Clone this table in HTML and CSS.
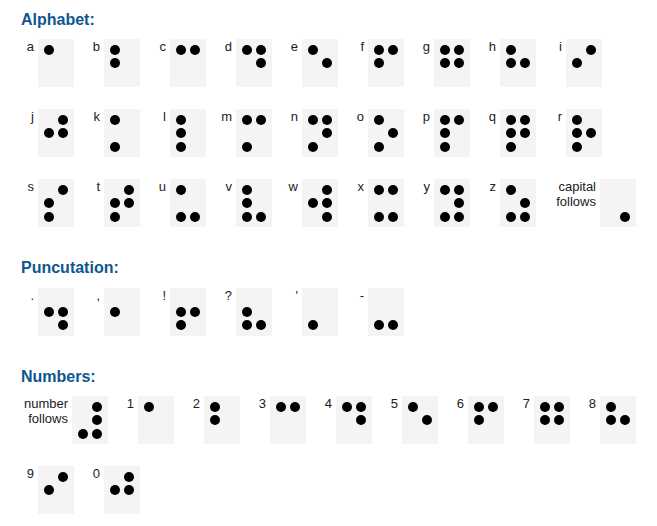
FILE: index.html
```html
<!DOCTYPE html>
<html lang="en">
<head>
<meta charset="utf-8">
<title>Braille</title>
<link rel="stylesheet" href="styles.css">
</head>
<body>
<div class="page">
  <section class="section">
    <h2 class="title">Alphabet:</h2>
    <div class="row">
      <div class="item"><span class="label">a</span><div class="cell"><i class="d"></i><i></i><i></i><i></i><i></i><i></i></div></div>
      <div class="item"><span class="label">b</span><div class="cell"><i class="d"></i><i></i><i class="d"></i><i></i><i></i><i></i></div></div>
      <div class="item"><span class="label">c</span><div class="cell"><i class="d"></i><i class="d"></i><i></i><i></i><i></i><i></i></div></div>
      <div class="item"><span class="label">d</span><div class="cell"><i class="d"></i><i class="d"></i><i></i><i class="d"></i><i></i><i></i></div></div>
      <div class="item"><span class="label">e</span><div class="cell"><i class="d"></i><i></i><i></i><i class="d"></i><i></i><i></i></div></div>
      <div class="item"><span class="label">f</span><div class="cell"><i class="d"></i><i class="d"></i><i class="d"></i><i></i><i></i><i></i></div></div>
      <div class="item"><span class="label">g</span><div class="cell"><i class="d"></i><i class="d"></i><i class="d"></i><i class="d"></i><i></i><i></i></div></div>
      <div class="item"><span class="label">h</span><div class="cell"><i class="d"></i><i></i><i class="d"></i><i class="d"></i><i></i><i></i></div></div>
      <div class="item"><span class="label">i</span><div class="cell"><i></i><i class="d"></i><i class="d"></i><i></i><i></i><i></i></div></div>
    </div>
    <div class="row">
      <div class="item"><span class="label">j</span><div class="cell"><i></i><i class="d"></i><i class="d"></i><i class="d"></i><i></i><i></i></div></div>
      <div class="item"><span class="label">k</span><div class="cell"><i class="d"></i><i></i><i></i><i></i><i class="d"></i><i></i></div></div>
      <div class="item"><span class="label">l</span><div class="cell"><i class="d"></i><i></i><i class="d"></i><i></i><i class="d"></i><i></i></div></div>
      <div class="item"><span class="label">m</span><div class="cell"><i class="d"></i><i class="d"></i><i></i><i></i><i class="d"></i><i></i></div></div>
      <div class="item"><span class="label">n</span><div class="cell"><i class="d"></i><i class="d"></i><i></i><i class="d"></i><i class="d"></i><i></i></div></div>
      <div class="item"><span class="label">o</span><div class="cell"><i class="d"></i><i></i><i></i><i class="d"></i><i class="d"></i><i></i></div></div>
      <div class="item"><span class="label">p</span><div class="cell"><i class="d"></i><i class="d"></i><i class="d"></i><i></i><i class="d"></i><i></i></div></div>
      <div class="item"><span class="label">q</span><div class="cell"><i class="d"></i><i class="d"></i><i class="d"></i><i class="d"></i><i class="d"></i><i></i></div></div>
      <div class="item"><span class="label">r</span><div class="cell"><i class="d"></i><i></i><i class="d"></i><i class="d"></i><i class="d"></i><i></i></div></div>
    </div>
    <div class="row">
      <div class="item"><span class="label">s</span><div class="cell"><i></i><i class="d"></i><i class="d"></i><i></i><i class="d"></i><i></i></div></div>
      <div class="item"><span class="label">t</span><div class="cell"><i></i><i class="d"></i><i class="d"></i><i class="d"></i><i class="d"></i><i></i></div></div>
      <div class="item"><span class="label">u</span><div class="cell"><i class="d"></i><i></i><i></i><i></i><i class="d"></i><i class="d"></i></div></div>
      <div class="item"><span class="label">v</span><div class="cell"><i class="d"></i><i></i><i class="d"></i><i></i><i class="d"></i><i class="d"></i></div></div>
      <div class="item"><span class="label">w</span><div class="cell"><i></i><i class="d"></i><i class="d"></i><i class="d"></i><i></i><i class="d"></i></div></div>
      <div class="item"><span class="label">x</span><div class="cell"><i class="d"></i><i class="d"></i><i></i><i></i><i class="d"></i><i class="d"></i></div></div>
      <div class="item"><span class="label">y</span><div class="cell"><i class="d"></i><i class="d"></i><i></i><i class="d"></i><i class="d"></i><i class="d"></i></div></div>
      <div class="item"><span class="label">z</span><div class="cell"><i class="d"></i><i></i><i></i><i class="d"></i><i class="d"></i><i class="d"></i></div></div>
      <div class="item"><span class="label wide">capital follows</span><div class="cell"><i></i><i></i><i></i><i></i><i></i><i class="d"></i></div></div>
    </div>
  </section>

  <section class="section">
    <h2 class="title">Puncutation:</h2>
    <div class="row">
      <div class="item"><span class="label">.</span><div class="cell"><i></i><i></i><i class="d"></i><i class="d"></i><i></i><i class="d"></i></div></div>
      <div class="item"><span class="label">,</span><div class="cell"><i></i><i></i><i class="d"></i><i></i><i></i><i></i></div></div>
      <div class="item"><span class="label">!</span><div class="cell"><i></i><i></i><i class="d"></i><i class="d"></i><i class="d"></i><i></i></div></div>
      <div class="item"><span class="label">?</span><div class="cell"><i></i><i></i><i class="d"></i><i></i><i class="d"></i><i class="d"></i></div></div>
      <div class="item"><span class="label">'</span><div class="cell"><i></i><i></i><i></i><i></i><i class="d"></i><i></i></div></div>
      <div class="item"><span class="label">-</span><div class="cell"><i></i><i></i><i></i><i></i><i class="d"></i><i class="d"></i></div></div>
    </div>
  </section>

  <section class="section">
    <h2 class="title">Numbers:</h2>
    <div class="row">
      <div class="item"><span class="label wide">number follows</span><div class="cell"><i></i><i class="d"></i><i></i><i class="d"></i><i class="d"></i><i class="d"></i></div></div>
      <div class="item"><span class="label">1</span><div class="cell"><i class="d"></i><i></i><i></i><i></i><i></i><i></i></div></div>
      <div class="item"><span class="label">2</span><div class="cell"><i class="d"></i><i></i><i class="d"></i><i></i><i></i><i></i></div></div>
      <div class="item"><span class="label">3</span><div class="cell"><i class="d"></i><i class="d"></i><i></i><i></i><i></i><i></i></div></div>
      <div class="item"><span class="label">4</span><div class="cell"><i class="d"></i><i class="d"></i><i></i><i class="d"></i><i></i><i></i></div></div>
      <div class="item"><span class="label">5</span><div class="cell"><i class="d"></i><i></i><i></i><i class="d"></i><i></i><i></i></div></div>
      <div class="item"><span class="label">6</span><div class="cell"><i class="d"></i><i class="d"></i><i class="d"></i><i></i><i></i><i></i></div></div>
      <div class="item"><span class="label">7</span><div class="cell"><i class="d"></i><i class="d"></i><i class="d"></i><i class="d"></i><i></i><i></i></div></div>
      <div class="item"><span class="label">8</span><div class="cell"><i class="d"></i><i></i><i class="d"></i><i class="d"></i><i></i><i></i></div></div>
    </div>
    <div class="row">
      <div class="item"><span class="label">9</span><div class="cell"><i></i><i class="d"></i><i class="d"></i><i></i><i></i><i></i></div></div>
      <div class="item"><span class="label">0</span><div class="cell"><i></i><i class="d"></i><i class="d"></i><i class="d"></i><i></i><i></i></div></div>
    </div>
  </section>
</div>
</body>
</html>
```

FILE: styles.css
```css
html, body {
  margin: 0;
  padding: 0;
  background: #ffffff;
}

body {
  font-family: "Liberation Sans", Arial, sans-serif;
  font-size: 13px;
  line-height: 15px;
  color: #222222;
}

.page {
  padding: 9.5px 0 0 21px;
}

.section {
  margin-bottom: 31px;
}

.title {
  margin: 0 0 9.5px 0;
  font-size: 16px;
  line-height: 20px;
  font-weight: bold;
  color: #0e5690;
}

.row {
  display: flex;
  align-items: flex-start;
  margin-bottom: 22px;
}

.section .row:last-child {
  margin-bottom: 0;
}

.item {
  display: flex;
  align-items: flex-start;
  gap: 4px;
  margin-right: 13px;
}

.label {
  width: 13px;
  text-align: right;
  flex: none;
}

.label.wide {
  width: 47px;
}

.cell {
  box-sizing: border-box;
  width: 36px;
  height: 48px;
  padding: 6px 0 0 5.5px;
  background: #f4f4f4;
  display: grid;
  grid-template-columns: 10px 10px;
  grid-auto-rows: 10px;
  column-gap: 4.5px;
  row-gap: 3.4px;
  align-content: start;
}

.cell i {
  display: block;
  width: 10px;
  height: 10px;
  border-radius: 50%;
}

.cell i.d {
  background: #000000;
}
```
